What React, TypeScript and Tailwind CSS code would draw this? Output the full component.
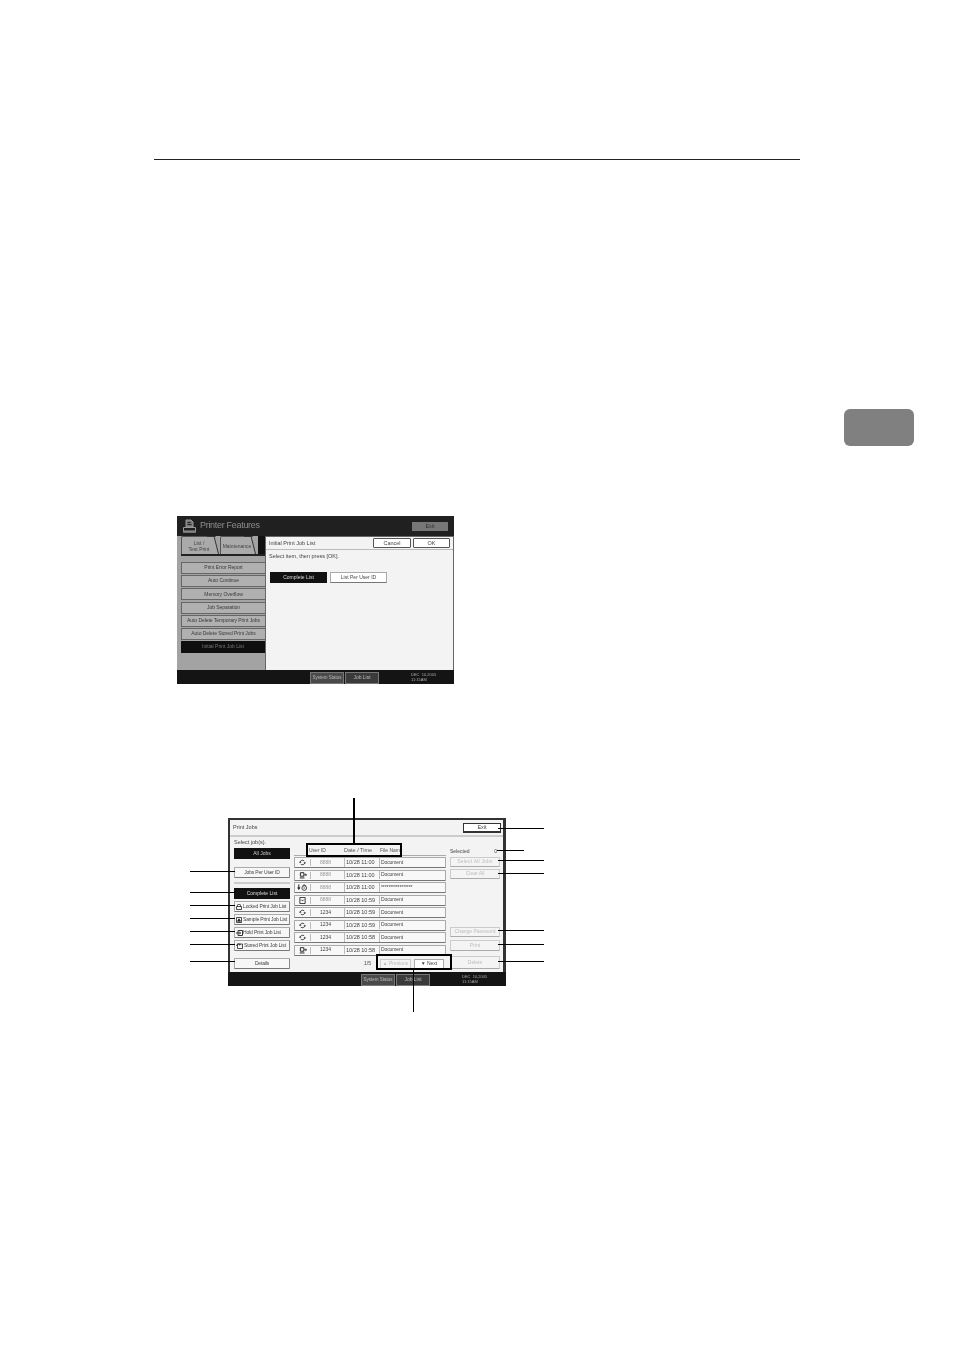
const menuItems = [
  'Print Error Report',
  'Auto Continue',
  'Memory Overflow',
  'Job Separation',
  'Auto Delete Temporary Print Jobs',
  'Auto Delete Stored Print Jobs',
]

const jobs = [
  { icon: 'cycle', user: '8888', date: '10/28 11:00', name: 'Document', dim: true },
  { icon: 'print', user: '8888', date: '10/28 11:00', name: 'Document', dim: true },
  { icon: 'lock', user: '8888', date: '10/28 11:00', name: '*****************', dim: true },
  { icon: 'doc', user: '8888', date: '10/28 10:59', name: 'Document', dim: true },
  { icon: 'cycle', user: '1234', date: '10/28 10:59', name: 'Document', dim: false },
  { icon: 'cycle', user: '1234', date: '10/28 10:59', name: 'Document', dim: false },
  { icon: 'cycle', user: '1234', date: '10/28 10:58', name: 'Document', dim: false },
  { icon: 'print', user: '1234', date: '10/28 10:58', name: 'Document', dim: false },
]

const leftLines = [871, 892, 905, 918, 931, 944, 961]
const rightLines = [828, 860, 873, 930, 944, 961]

function JobIcon({ type }: { type: string }) {
  if (type === 'cycle') {
    return (
      <svg width="7" height="7" viewBox="0 0 8 8" fill="none" stroke="#333" strokeWidth="1">
        <path d="M1.4 4a2.6 2.6 0 0 1 4.6-1.7M6.6 4A2.6 2.6 0 0 1 2 5.7" />
        <path d="M0.2 3.6h2.4M5.4 4.4h2.4" />
      </svg>
    )
  }
  if (type === 'print') {
    return (
      <svg width="8" height="7" viewBox="0 0 9 8" fill="none" stroke="#222" strokeWidth="1.1">
        <path d="M1.5 0.8h4v4h-4zM0.8 6.8h5.4" />
        <path d="M6 3.2h2.4M7.4 2.2l1.1 1-1.1 1" />
      </svg>
    )
  }
  if (type === 'lock') {
    return (
      <svg width="11" height="7" viewBox="0 0 12 8" fill="none" stroke="#222" strokeWidth="0.9">
        <path d="M1.8 0.5v5M0.5 4l1.3 1.8L3.1 4" strokeWidth="1.2" />
        <circle cx="8" cy="4.6" r="2.7" />
        <path d="M6.6 2.4a1.4 1.4 0 0 1 2.8 0" />
        <path d="M7 4.6h2" />
      </svg>
    )
  }
  return (
    <svg width="7" height="7" viewBox="0 0 8 8" fill="none" stroke="#222" strokeWidth="1">
      <path d="M1 0.5h6v7H1z" />
      <path d="M2.5 3l1.5 1.5L5.5 3" />
    </svg>
  )
}

function ListIcon({ type }: { type: string }) {
  if (type === 'lock') {
    return (
      <svg width="6" height="6" viewBox="0 0 6 6" fill="none" stroke="#222" strokeWidth="0.8" className="mr-px shrink-0">
        <path d="M0.5 2.5h5v3h-5zM1.5 2.5V1.2a1.5 1 0 0 1 3 0V2.5" />
      </svg>
    )
  }
  if (type === 'sample') {
    return (
      <svg width="6" height="6" viewBox="0 0 6 6" fill="none" stroke="#222" strokeWidth="0.8" className="mr-px shrink-0">
        <path d="M0.5 0.5h5v5h-5z" />
        <path d="M1.5 4.2l1.5-2.4 1.5 2.4z" fill="#222" />
      </svg>
    )
  }
  if (type === 'hold') {
    return (
      <svg width="7" height="6" viewBox="0 0 7 6" fill="none" stroke="#222" strokeWidth="0.9" className="shrink-0">
        <path d="M2 0.5h4.5v5H2z" />
        <path d="M0 3h4.5M3.4 2l1.2 1-1.2 1" />
      </svg>
    )
  }
  return (
    <svg width="7" height="6" viewBox="0 0 7 6" fill="none" stroke="#222" strokeWidth="0.8" className="mr-px shrink-0">
      <path d="M1.5 1h5v4.5h-5z" />
      <path d="M0.5 3a2 2 0 0 1 3.5-1.4M4 1l0.2 1-1 0" />
    </svg>
  )
}

function PrinterLogo() {
  return (
    <svg width="15" height="14" viewBox="0 0 15 14" fill="none" stroke="#999" strokeWidth="1">
      <path d="M4 1h5l2 2v5H4z" fill="#777" />
      <path d="M5.5 3.5h3M5.5 5.5h4" stroke="#222" />
      <path d="M1.5 8.5h12v3.5h-12z" />
      <path d="M1 13h13" strokeWidth="1.4" />
    </svg>
  )
}

function StatusBar({ left }: { left: string }) {
  return (
    <div className={`flex h-[14px] items-end bg-[#141414] ${left}`}>
      <div className="flex h-[12px] w-[34px] items-center justify-center whitespace-nowrap border border-[#777] bg-[#4a4a4a] text-[4.5px] text-[#bbb]">System Status</div>
      <div className="ml-px flex h-[12px] w-[34px] items-center justify-center whitespace-nowrap border border-[#777] bg-[#3a3a3a] text-[5px] text-[#bbb]">Job List</div>
      <div className="ml-[32px] self-center text-[4px] leading-[5px] text-[#aaa]">
        <div>DEC&nbsp; 10,2005</div>
        <div>11:15AM</div>
      </div>
    </div>
  )
}

function SideButton({ label, active, icon }: { label: string; active?: boolean; icon?: string }) {
  if (active) {
    return <div className="flex h-[11px] w-[56px] items-center justify-center bg-[#111] text-[5px] text-[#ddd]">{label}</div>
  }
  return (
    <div className={`flex h-[11px] w-[56px] items-center whitespace-nowrap rounded-[1px] border border-[#aaa] border-b-[#777] border-r-[#888] bg-[#f7f7f7] text-[5px] tracking-[-0.15px] text-[#444] ${icon ? 'pl-px' : 'justify-center'}`}>
      {icon && <ListIcon type={icon} />}
      {label}
    </div>
  )
}

function ActionButton({ label, className }: { label: string; className: string }) {
  return (
    <div className={`flex w-[50px] items-center justify-center whitespace-nowrap rounded-[1px] border border-[#ccc] border-b-[#aaa] bg-[#f4f4f4] text-[5px] text-[#bdbdbd] ${className}`}>
      {label}
    </div>
  )
}

function Tab({ className, children }: { className: string; children: React.ReactNode }) {
  return (
    <div className={`relative flex h-[18px] items-center justify-center rounded-tl-[2px] border-l border-t border-[#555] bg-[#aaa] text-center text-[5px] leading-[6px] ${className}`}>
      <div className="absolute -right-[3px] -top-px bottom-0 w-[8px] origin-bottom skew-x-[14deg] border-r border-t border-[#333] bg-[#aaa]" />
      <span className="relative whitespace-nowrap">{children}</span>
    </div>
  )
}

function PrinterScreen() {
  return (
    <div className="ml-[177px] mt-[70px] flex h-[168px] w-[277px] flex-col bg-[#a3a3a3] text-[#444] blur-[0.25px]">
      <div className="flex h-[20px] items-center bg-[#202020] pl-[5px] pr-[6px]">
        <PrinterLogo />
        <span className="ml-[3px] text-[9px] tracking-[-0.3px] text-[#8c8c8c]">Printer Features</span>
        <div className="ml-auto flex h-[9px] w-[36px] items-center justify-center bg-[#777] text-[5.5px] text-[#333]">Exit</div>
      </div>
      <div className="flex min-h-0 flex-1">
        <div className="flex w-[88px] flex-col pl-[4px]">
          <div className="flex h-[20px] items-end border-b-2 border-[#222]">
            <Tab className="w-[35px]">List /<br />Test Print</Tab>
            <Tab className="ml-[4px] w-[33px]">Maintenance</Tab>
            <div className="ml-[5px] h-[18px] flex-1 bg-[#111]" />
          </div>
          <div className="mt-[6px] flex flex-col gap-[1.2px]">
            {menuItems.map(item => (
              <div key={item} className="flex h-[12px] items-center justify-center whitespace-nowrap border border-[#666] border-r-0 bg-[#b0b0b0] text-[5px] tracking-[-0.05px] text-[#3a3a3a]">
                {item}
              </div>
            ))}
            <div className="flex h-[12px] items-center justify-center bg-[#0e0e0e] text-[5px] text-[#777]">Initial Print Job List</div>
          </div>
        </div>
        <div className="flex flex-1 flex-col border-[1.5px] border-b-0 border-[#666] bg-[#f3f3f3]">
          <div className="flex h-[13px] items-center border-b border-[#bbb] pl-[3px] pr-[3px] text-[5.5px]">
            <span>Initial Print Job List</span>
            <div className="ml-auto flex h-[10px] w-[38px] items-center justify-center rounded-[1px] border border-[#555] bg-white">Cancel</div>
            <div className="ml-[2px] flex h-[10px] w-[37px] items-center justify-center rounded-[1px] border border-[#555] bg-white">OK</div>
          </div>
          <div className="pl-[3px] pt-[2px] text-[5.5px]">Select item, then press [OK].</div>
          <div className="ml-[4px] mt-[12px] flex gap-[3px] text-[5px]">
            <div className="flex h-[11px] w-[57px] items-center justify-center bg-[#111] text-[#ddd]">Complete List</div>
            <div className="flex h-[11px] w-[57px] items-center justify-center border border-[#aaa] border-b-[#777] bg-white">List Per User ID</div>
          </div>
        </div>
      </div>
      <StatusBar left="pl-[133px]" />
    </div>
  )
}

function JobsScreen() {
  return (
    <div className="ml-[228px] mt-[134px] flex h-[168px] w-[278px] flex-col bg-[#333] pl-[2px] pr-[3px] pt-[2px] text-[#444] blur-[0.25px]">
      <div className="flex min-h-0 flex-1 flex-col bg-[#f3f3f3]">
        <div className="flex h-[17px] items-center border-b-2 border-[#ccc] pl-[3px] pr-[2px] text-[5.5px]">
          <span>Print Jobs</span>
          <div className="ml-auto flex h-[10px] w-[38px] items-center justify-center border border-[#333] border-b-2 bg-white">Exit</div>
        </div>
        <div className="flex flex-1 pl-[4px]">
          <div className="flex w-[56px] flex-col">
            <div className="mt-px text-[5.5px] leading-[8px]">Select job(s).</div>
            <div className="mt-[2px] flex h-[11px] items-center justify-center bg-[#111] text-[5px] text-[#ccc]">All Jobs</div>
            <div className="mt-[8px]"><SideButton label="Jobs Per User ID" /></div>
            <div className="mt-[4px] h-[2px] bg-[#ccc]" />
            <div className="mt-[4px] flex flex-col gap-[2px]">
              <SideButton label="Complete List" active />
              <SideButton label="Locked Print Job List" icon="lock" />
              <SideButton label="Sample Print Job List" icon="sample" />
              <SideButton label="Hold Print Job List" icon="hold" />
              <SideButton label="Stored Print Job List" icon="stored" />
            </div>
            <div className="mt-[7px]"><SideButton label="Details" /></div>
          </div>
          <div className="ml-[4px] flex w-[152px] flex-col">
            <div className="flex h-[19px] items-end border-b border-[#aaa] pb-px text-[5px] text-[#555]">
              <span className="ml-[15px] w-[35px]">User ID</span>
              <span className="w-[36px] text-[5.5px]">Date / Time</span>
              <span>File Nam</span>
            </div>
            <div className="mt-px flex flex-col gap-[1.5px]">
              {jobs.map((job, i) => (
                <div key={i} className="flex h-[11px] items-center rounded-[1px] border border-[#aaa] border-b-[#777] bg-[#f8f8f8] text-[5px]">
                  <div className="flex w-[16px] justify-center border-r border-[#bbb]"><JobIcon type={job.icon} /></div>
                  <span className={`w-[33px] pl-[9px] ${job.dim ? 'text-[#999]' : 'text-[#444]'}`}>{job.user}</span>
                  <span className="w-[36px] whitespace-nowrap border-x border-[#bbb] pl-px text-[5.5px] text-[#444]">{job.date}</span>
                  <span className="pl-px tracking-[-0.1px]">{job.name}</span>
                </div>
              ))}
            </div>
            <div className="mt-[3px] flex items-center text-[5px]">
              <span className="ml-[70px]">1/5</span>
              <div className="ml-[9px] flex h-[10px] w-[31px] items-center justify-center border border-[#ccc] bg-[#f4f4f4] text-[#bbb]">▲ Previous</div>
              <div className="ml-[3px] flex h-[10px] w-[30px] items-center justify-center border border-[#aaa] bg-white">▼ Next</div>
            </div>
          </div>
          <div className="ml-[4px] flex flex-1 flex-col">
            <div className="mt-[11px] flex h-[7px] w-[47px] justify-between text-[5px] leading-[7px]">
              <span>Selected</span>
              <span>0</span>
            </div>
            <ActionButton label="Select All Jobs" className="mt-[2px] h-[10px] tracking-[0.2px]" />
            <ActionButton label="Clear All" className="mt-[2px] h-[10px]" />
            <ActionButton label="Change Password" className="mt-[48px] h-[10px]" />
            <ActionButton label="Print" className="mt-[3px] h-[11px]" />
            <ActionButton label="Delete" className="mt-[5px] h-[13px]" />
          </div>
        </div>
      </div>
      <div className="-ml-[2px] -mr-[3px]"><StatusBar left="pl-[133px]" /></div>
    </div>
  )
}

export default function App() {
  return (
    <div className="relative h-[1350px] w-[954px] overflow-hidden bg-white font-['Liberation_Sans',sans-serif]">
      <div className="pt-[159px]">
        <div className="ml-[154px] h-px w-[646px] bg-[#222]" />
        <div className="ml-[844px] mt-[249px] h-[37px] w-[70px] rounded-[6px] bg-[#808080]" />
        <PrinterScreen />
        <JobsScreen />
      </div>

      {/* callouts */}
      <div className="absolute left-[306px] top-[843px] h-[14px] w-[96px] border-2 border-black" />
      <div className="absolute left-[376px] top-[954px] h-[16px] w-[76px] border-2 border-black" />
      <div className="absolute left-[353px] top-[798px] h-[45px] w-[1.5px] bg-black" />
      <div className="absolute left-[413px] top-[970px] h-[42px] w-px bg-black" />
      {leftLines.map(y => (
        <div key={y} className="absolute left-[190px] h-px w-[45px] bg-black" style={{ top: y }} />
      ))}
      {rightLines.map(y => (
        <div key={y} className="absolute left-[498px] h-px w-[46px] bg-black" style={{ top: y }} />
      ))}
      <div className="absolute left-[497px] top-[850px] h-px w-[27px] bg-black" />
    </div>
  )
}
